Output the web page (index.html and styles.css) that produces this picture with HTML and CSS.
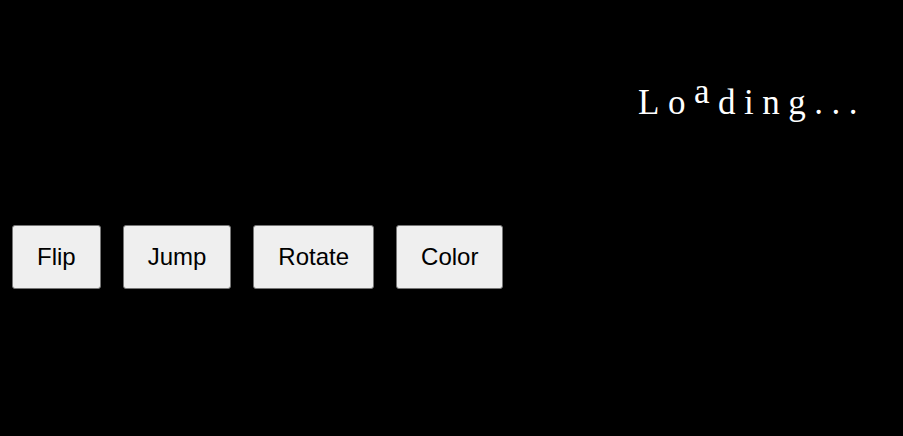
FILE: index.html
```html
<!DOCTYPE html>
<html>
<head>
<meta charset="utf-8">
<link rel="stylesheet" href="styles.css">
</head>
<body>
<div class="stage">
  <div class="loading">
    <span class="ch">L</span><span class="ch">o</span><span class="ch up">a</span><span class="ch">d</span><span class="ch">i</span><span class="ch">n</span><span class="ch">g</span><span class="ch">.</span><span class="ch">.</span><span class="ch">.</span>
  </div>
</div>
<div class="controls">
  <button class="btn">Flip</button>
  <button class="btn">Jump</button>
  <button class="btn">Rotate</button>
  <button class="btn">Color</button>
</div>
</body>
</html>
```
FILE: styles.css
```css
html, body {
  margin: 0;
  background: #000;
  height: 100%;
}
.stage {
  height: 225px;
  display: flex;
  justify-content: flex-end;
  align-items: flex-start;
  padding-right: 37px;
  box-sizing: border-box;
}
.loading {
  margin-top: 83px;
  font-family: "Liberation Serif", "Times New Roman", serif;
  font-size: 35px;
  line-height: 40px;
  color: #fff;
  display: flex;
  align-items: flex-start;
}
.ch {
  display: inline-block;
  margin-right: 8.5px;
}
.ch.up {
  transform: translateY(-11px);
}
.controls {
  display: flex;
  gap: 22px;
  padding-left: 12px;
}
.btn {
  font-family: "Liberation Sans", Arial, sans-serif;
  font-size: 24px;
  height: 64px;
  padding: 0 24px;
  background: #efefef;
  color: #000;
  border: 1px solid #767676;
  border-radius: 3px;
}
```
